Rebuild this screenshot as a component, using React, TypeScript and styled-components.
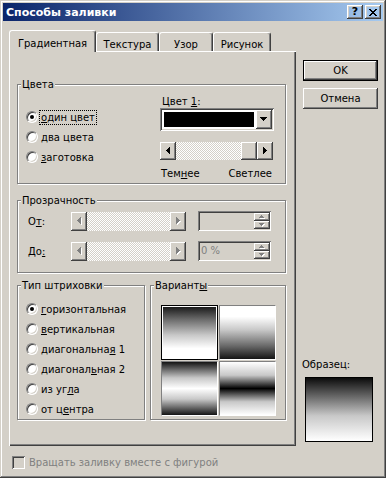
import React from 'react'
import styled, { createGlobalStyle, css } from 'styled-components'

const FACE = '#d4d0c8'

const raised = css`
  box-shadow: inset -1px -1px #404040, inset 1px 1px #fff, inset -2px -2px #808080, inset 2px 2px ${FACE};
`
const sunken = css`
  box-shadow: inset 1px 1px #808080, inset -1px -1px #fff, inset 2px 2px #404040, inset -2px -2px ${FACE};
`

const GlobalStyle = createGlobalStyle`
  html, body { margin: 0; padding: 0; background: ${FACE}; }
  body {
    font-family: Tahoma, 'DejaVu Sans', sans-serif;
    font-size: 10px;
    color: #000;
  }
`

// pixel triangles for scroll / spin / combo arrows
const ARROWS: Record<string, { d: string; w: number; h: number }> = {
  left: { d: 'M3 0H4V7H3V6H2V5H1V4H0V3H1V2H2V1H3Z', w: 4, h: 7 },
  right: { d: 'M0 0H1V1H2V2H3V3H4V4H3V5H2V6H1V7H0Z', w: 4, h: 7 },
  down: { d: 'M0 0H7V1H6V2H5V3H4V4H3V3H2V2H1V1H0Z', w: 7, h: 4 },
  up: { d: 'M3 0H4V1H5V2H6V3H7V4H0V3H1V2H2V1H3Z', w: 7, h: 4 },
  spinUp: { d: 'M2 0H3V1H4V2H5V3H0V2H1V1H2Z', w: 5, h: 3 },
  spinDown: { d: 'M0 0H5V1H4V2H3V3H2V2H1V1H0Z', w: 5, h: 3 },
}

const Arrow: React.FC<{ dir: string; disabled?: boolean }> = ({ dir, disabled }) => {
  const a = ARROWS[dir]
  return (
    <svg width={a.w + 1} height={a.h + 1} shapeRendering="crispEdges" style={{ display: 'block' }}>
      {disabled && <path d={a.d} fill="#fff" transform="translate(1,1)" />}
      <path d={a.d} fill={disabled ? '#808080' : '#000'} />
    </svg>
  )
}

const CloseGlyph = () => (
  <svg width="8" height="7" shapeRendering="crispEdges" style={{ display: 'block' }}>
    <path
      d="M0 0h2v1H0zM6 0h2v1H6zM1 1h2v1H1zM5 1h2v1H5zM2 2h4v1H2zM3 3h2v1H3zM2 4h4v1H2zM1 5h2v1H1zM5 5h2v1H5zM0 6h2v1H0zM6 6h2v1H6z"
      fill="#000"
    />
  </svg>
)

const Window = styled.div`
  width: 386px;
  height: 478px;
  box-sizing: border-box;
  padding: 3px;
  background: ${FACE};
  box-shadow: inset -1px -1px #404040, inset 1px 1px ${FACE}, inset -2px -2px #808080, inset 2px 2px #fff;
  display: flex;
  flex-direction: column;
`

const TitleBar = styled.div`
  height: 18px;
  display: flex;
  align-items: center;
  padding: 0 2px 0 3px;
  background: linear-gradient(to right, #0a246a, #a6caf0);
`

const Title = styled.div`
  color: #fff;
  font-weight: bold;
  font-size: 11px;
`

const CaptionButtons = styled.div`
  margin-left: auto;
  display: flex;
  gap: 2px;
`

const CaptionButton = styled.div`
  width: 16px;
  height: 14px;
  ${raised};
  display: flex;
  align-items: center;
  justify-content: center;
  font-weight: bold;
  font-size: 11px;
  line-height: 14px;
`

const Body = styled.div`
  display: flex;
  gap: 7px;
  padding: 9px 0 0 6px;
`

const LeftCol = styled.div`
  width: 287px;
  display: flex;
  flex-direction: column;
`

const TabRow = styled.div`
  display: flex;
  align-items: flex-end;
  height: 21px;
`

const Tab = styled.div<{ $active?: boolean; $w: number }>`
  width: ${(p) => p.$w}px;
  box-sizing: border-box;
  height: ${(p) => (p.$active ? 22 : 19)}px;
  margin-bottom: ${(p) => (p.$active ? -1 : 0)}px;
  padding-top: ${(p) => (p.$active ? 6 : 5)}px;
  position: relative;
  z-index: ${(p) => (p.$active ? 1 : 0)};
  background: ${FACE};
  border-top: 1px solid #fff;
  border-left: 1px solid #fff;
  border-right: 1px solid #404040;
  border-radius: 3px 3px 0 0;
  box-shadow: inset -1px 0 #808080;
  text-align: center;
  line-height: 13px;
  white-space: nowrap;
`

const Panel = styled.div`
  height: 395px;
  box-sizing: border-box;
  padding: 27px 10px 0 8px;
  box-shadow: inset 1px 1px #fff, inset -1px -1px #404040, inset -2px -2px #808080;
  display: flex;
  flex-direction: column;
`

const Group = styled.fieldset<{ $mt?: number; $w?: number }>`
  margin: ${(p) => p.$mt ?? 0}px 0 0;
  padding: 0;
  min-width: 0;
  ${(p) => (p.$w ? `width: ${p.$w}px; box-sizing: border-box; flex: none;` : '')}
  border: 1px solid #808080;
  box-shadow: inset 1px 1px #fff, 1px 1px #fff;
`

const Legend = styled.legend`
  margin-left: 3px;
  padding: 0 1px;
  line-height: 13px;
  background: ${FACE};
`

const U = styled.u`
  text-decoration: underline;
  text-underline-offset: 1px;
`

const ColorsBody = styled.div`
  display: grid;
  grid-template-columns: 134px 114px;
  padding: 4px 0 3px 8px;
`

const RadioList = styled.div<{ $pt: number }>`
  padding-top: ${(p) => p.$pt}px;
  display: flex;
  flex-direction: column;
`

const RadioRow = styled.div`
  display: flex;
  align-items: center;
  height: 20px;
`

const RadioDot = styled.span<{ $on?: boolean }>`
  width: 12px;
  height: 12px;
  box-sizing: border-box;
  border-radius: 50%;
  border: 1px solid;
  border-color: #808080 #fff #fff #808080;
  box-shadow: inset 1px 1px #404040, inset -1px -1px ${FACE};
  background: #fff;
  display: flex;
  align-items: center;
  justify-content: center;
  flex: none;
  &::after {
    content: '';
    width: 4px;
    height: 4px;
    border-radius: 50%;
    background: #000;
    display: ${(p) => (p.$on ? 'block' : 'none')};
  }
`

const RadioText = styled.span<{ $focus?: boolean }>`
  margin-left: 1px;
  padding: 0 1px;
  border: 1px dotted ${(p) => (p.$focus ? '#000' : 'transparent')};
  line-height: 13px;
  white-space: nowrap;
`

const ColorSide = styled.div`
  display: flex;
  flex-direction: column;
`

const Caption = styled.div`
  line-height: 13px;
  padding-left: 2px;
`

const Combo = styled.div`
  width: 114px;
  height: 23px;
  box-sizing: border-box;
  padding: 2px;
  background: #fff;
  ${sunken};
  display: flex;
`

const Swatch = styled.div<{ $color: string }>`
  flex: 1;
  margin: 2px;
  background: ${(p) => p.$color};
`

const SquareButton = styled.div<{ $w?: number }>`
  width: ${(p) => p.$w ?? 16}px;
  flex: none;
  ${raised};
  background: ${FACE};
  display: flex;
  align-items: center;
  justify-content: center;
`

const ScrollBar = styled.div<{ $w: number; $h: number; $mt?: number }>`
  width: ${(p) => p.$w}px;
  height: ${(p) => p.$h}px;
  margin-top: ${(p) => p.$mt ?? 0}px;
  display: flex;
  flex: none;
`

const Track = styled.div`
  flex: 1;
  background: repeating-conic-gradient(#fff 0% 25%, ${FACE} 0% 50%) 0 0 / 2px 2px;
`

const RangeLabels = styled.div`
  width: 113px;
  margin-top: 7px;
  display: flex;
  justify-content: space-between;
  line-height: 13px;
  padding: 0 1px;
  box-sizing: border-box;
`

const TransBody = styled.div`
  padding: 4px 0 11px 8px;
  display: flex;
  flex-direction: column;
  gap: 10px;
`

const TransRow = styled.div`
  display: flex;
  align-items: center;
  height: 20px;
`

const RowLabel = styled.div`
  width: 45px;
  padding-left: 2px;
  box-sizing: border-box;
  line-height: 13px;
`

const Spin = styled.div`
  width: 73px;
  height: 20px;
  margin-left: 12px;
  box-sizing: border-box;
  padding: 2px 1px 2px 2px;
  ${sunken};
  display: flex;
`

const SpinValue = styled.div`
  flex: 1;
  color: #808080;
  line-height: 16px;
  padding-left: 1px;
`

const SpinButtons = styled.div`
  width: 16px;
  display: flex;
  flex-direction: column;
`

const SpinHalf = styled(SquareButton)`
  width: 16px;
  flex: 1;
`

const BottomRow = styled.div`
  display: flex;
  gap: 5px;
  margin-top: 6px;
`

const VariantGrid = styled.div`
  padding: 13px 0 3px 10px;
  display: grid;
  grid-template-columns: 57px 57px;
  grid-template-rows: 55px 55px;
  gap: 1px;
`

const VariantCell = styled.div<{ $bg: string; $selected?: boolean }>`
  box-sizing: border-box;
  background: ${(p) => p.$bg};
  border: 1px solid;
  border-color: ${(p) => (p.$selected ? '#000' : '#808080 #fff #fff #808080')};
  box-shadow: ${(p) => (p.$selected ? 'inset 0 0 0 1px #fff' : 'none')};
`

const CheckRow = styled.div`
  margin-top: 10px;
  padding-left: 3px;
  display: flex;
  align-items: center;
  gap: 4px;
  color: #808080;
  line-height: 13px;
`

const CheckBox = styled.div`
  width: 13px;
  height: 13px;
  ${sunken};
  background: ${FACE};
`

const RightCol = styled.div`
  width: 75px;
  margin-top: 30px;
  height: 395px;
  box-sizing: border-box;
  padding-bottom: 13px;
  display: flex;
  flex-direction: column;
`

const PushButton = styled.div<{ $default?: boolean; $mt?: number }>`
  height: 21px;
  margin-top: ${(p) => p.$mt ?? 0}px;
  box-sizing: border-box;
  background: ${FACE};
  ${(p) =>
    p.$default
      ? `border: 1px solid #000; box-shadow: inset -1px -1px #404040, inset 1px 1px #fff, inset -2px -2px #808080;`
      : `box-shadow: inset -1px -1px #404040, inset 1px 1px #fff, inset -2px -2px #808080, inset 2px 2px ${FACE};`}
  display: flex;
  align-items: center;
  justify-content: center;
`

const SampleBlock = styled.div`
  margin-top: auto;
  display: flex;
  flex-direction: column;
`

const SampleLabel = styled.div`
  line-height: 13px;
  margin: 0 0 6px -1px;
`

const SampleBox = styled.div`
  width: 68px;
  height: 65px;
  margin-left: 2px;
  box-sizing: border-box;
  border: 1px solid #000;
  background: linear-gradient(#0c0c0c, #5a5a5a 25%, #c8c8c8 60%, #fff 100%);
`

const SHADING = [
  { key: 'h', node: <><U>г</U>оризонтальная</> },
  { key: 'v', node: <><U>в</U>ертикальная</> },
  { key: 'd1', node: <>диагональна<U>я</U> 1</> },
  { key: 'd2', node: <>диагонал<U>ь</U>ная 2</> },
  { key: 'c', node: <>из уг<U>л</U>а</> },
  { key: 'm', node: <>от ц<U>е</U>нтра</> },
]

const VARIANTS = [
  'linear-gradient(#141414, #6a6a6a 25%, #c8c8c8 55%, #fff 80%)',
  'linear-gradient(#fff 20%, #c8c8c8 45%, #6a6a6a 75%, #141414)',
  'linear-gradient(#141414, #c8c8c8 30%, #fff 50%, #c8c8c8 70%, #141414)',
  'linear-gradient(#fff, #c8c8c8 25%, #000 50%, #c8c8c8 75%, #fff)',
]

const DisabledScroll: React.FC = () => (
  <ScrollBar $w={115} $h={19}>
    <SquareButton><Arrow dir="left" disabled /></SquareButton>
    <Track />
    <SquareButton><Arrow dir="right" disabled /></SquareButton>
  </ScrollBar>
)

const SpinBox: React.FC<{ value?: string }> = ({ value }) => (
  <Spin>
    <SpinValue>{value}</SpinValue>
    <SpinButtons>
      <SpinHalf><Arrow dir="spinUp" disabled /></SpinHalf>
      <SpinHalf><Arrow dir="spinDown" disabled /></SpinHalf>
    </SpinButtons>
  </Spin>
)

const App: React.FC = () => {
  return (
    <>
      <GlobalStyle />
      <Window>
        <TitleBar>
          <Title>Способы заливки</Title>
          <CaptionButtons>
            <CaptionButton>?</CaptionButton>
            <CaptionButton><CloseGlyph /></CaptionButton>
          </CaptionButtons>
        </TitleBar>
        <Body>
          <LeftCol>
            <TabRow>
              <Tab $active $w={87}>Градиентная</Tab>
              <Tab $w={63}>Текстура</Tab>
              <Tab $w={54}>Узор</Tab>
              <Tab $w={58}>Рисунок</Tab>
            </TabRow>
            <Panel>
              <Group>
                <Legend>Цвета</Legend>
                <ColorsBody>
                  <RadioList $pt={12}>
                    <RadioRow>
                      <RadioDot $on />
                      <RadioText $focus><U>о</U>дин цвет</RadioText>
                    </RadioRow>
                    <RadioRow>
                      <RadioDot />
                      <RadioText><U>д</U>ва цвета</RadioText>
                    </RadioRow>
                    <RadioRow>
                      <RadioDot />
                      <RadioText><U>з</U>аготовка</RadioText>
                    </RadioRow>
                  </RadioList>
                  <ColorSide>
                    <Caption>Цвет <U>1</U>:</Caption>
                    <Combo>
                      <Swatch $color="#000" />
                      <SquareButton><Arrow dir="down" /></SquareButton>
                    </Combo>
                    <ScrollBar $w={113} $h={18} $mt={11}>
                      <SquareButton><Arrow dir="left" /></SquareButton>
                      <Track />
                      <SquareButton />
                      <SquareButton><Arrow dir="right" /></SquareButton>
                    </ScrollBar>
                    <RangeLabels>
                      <span>Тем<U>н</U>ее</span>
                      <span>Светлее</span>
                    </RangeLabels>
                  </ColorSide>
                </ColorsBody>
              </Group>

              <Group $mt={10}>
                <Legend>Прозрачность</Legend>
                <TransBody>
                  <TransRow>
                    <RowLabel>О<U>т</U>:</RowLabel>
                    <DisabledScroll />
                    <SpinBox />
                  </TransRow>
                  <TransRow>
                    <RowLabel>До<U>:</U></RowLabel>
                    <DisabledScroll />
                    <SpinBox value="0 %" />
                  </TransRow>
                </TransBody>
              </Group>

              <BottomRow>
                <Group $w={128}>
                  <Legend>Тип штриховки</Legend>
                  <RadioList $pt={7}>
                    {SHADING.map((s, i) => (
                      <RadioRow key={s.key} style={{ paddingLeft: 8 }}>
                        <RadioDot $on={i === 0} />
                        <RadioText>{s.node}</RadioText>
                      </RadioRow>
                    ))}
                  </RadioList>
                </Group>
                <Group $w={136}>
                  <Legend>Вариант<U>ы</U></Legend>
                  <VariantGrid>
                    {VARIANTS.map((bg, i) => (
                      <VariantCell key={i} $bg={bg} $selected={i === 0} />
                    ))}
                  </VariantGrid>
                </Group>
              </BottomRow>
            </Panel>
            <CheckRow>
              <CheckBox />
              <span>Вращать заливку вместе с фигурой</span>
            </CheckRow>
          </LeftCol>

          <RightCol>
            <PushButton $default>OK</PushButton>
            <PushButton $mt={7}>Отмена</PushButton>
            <SampleBlock>
              <SampleLabel>Образец:</SampleLabel>
              <SampleBox />
            </SampleBlock>
          </RightCol>
        </Body>
      </Window>
    </>
  )
}

export default App
